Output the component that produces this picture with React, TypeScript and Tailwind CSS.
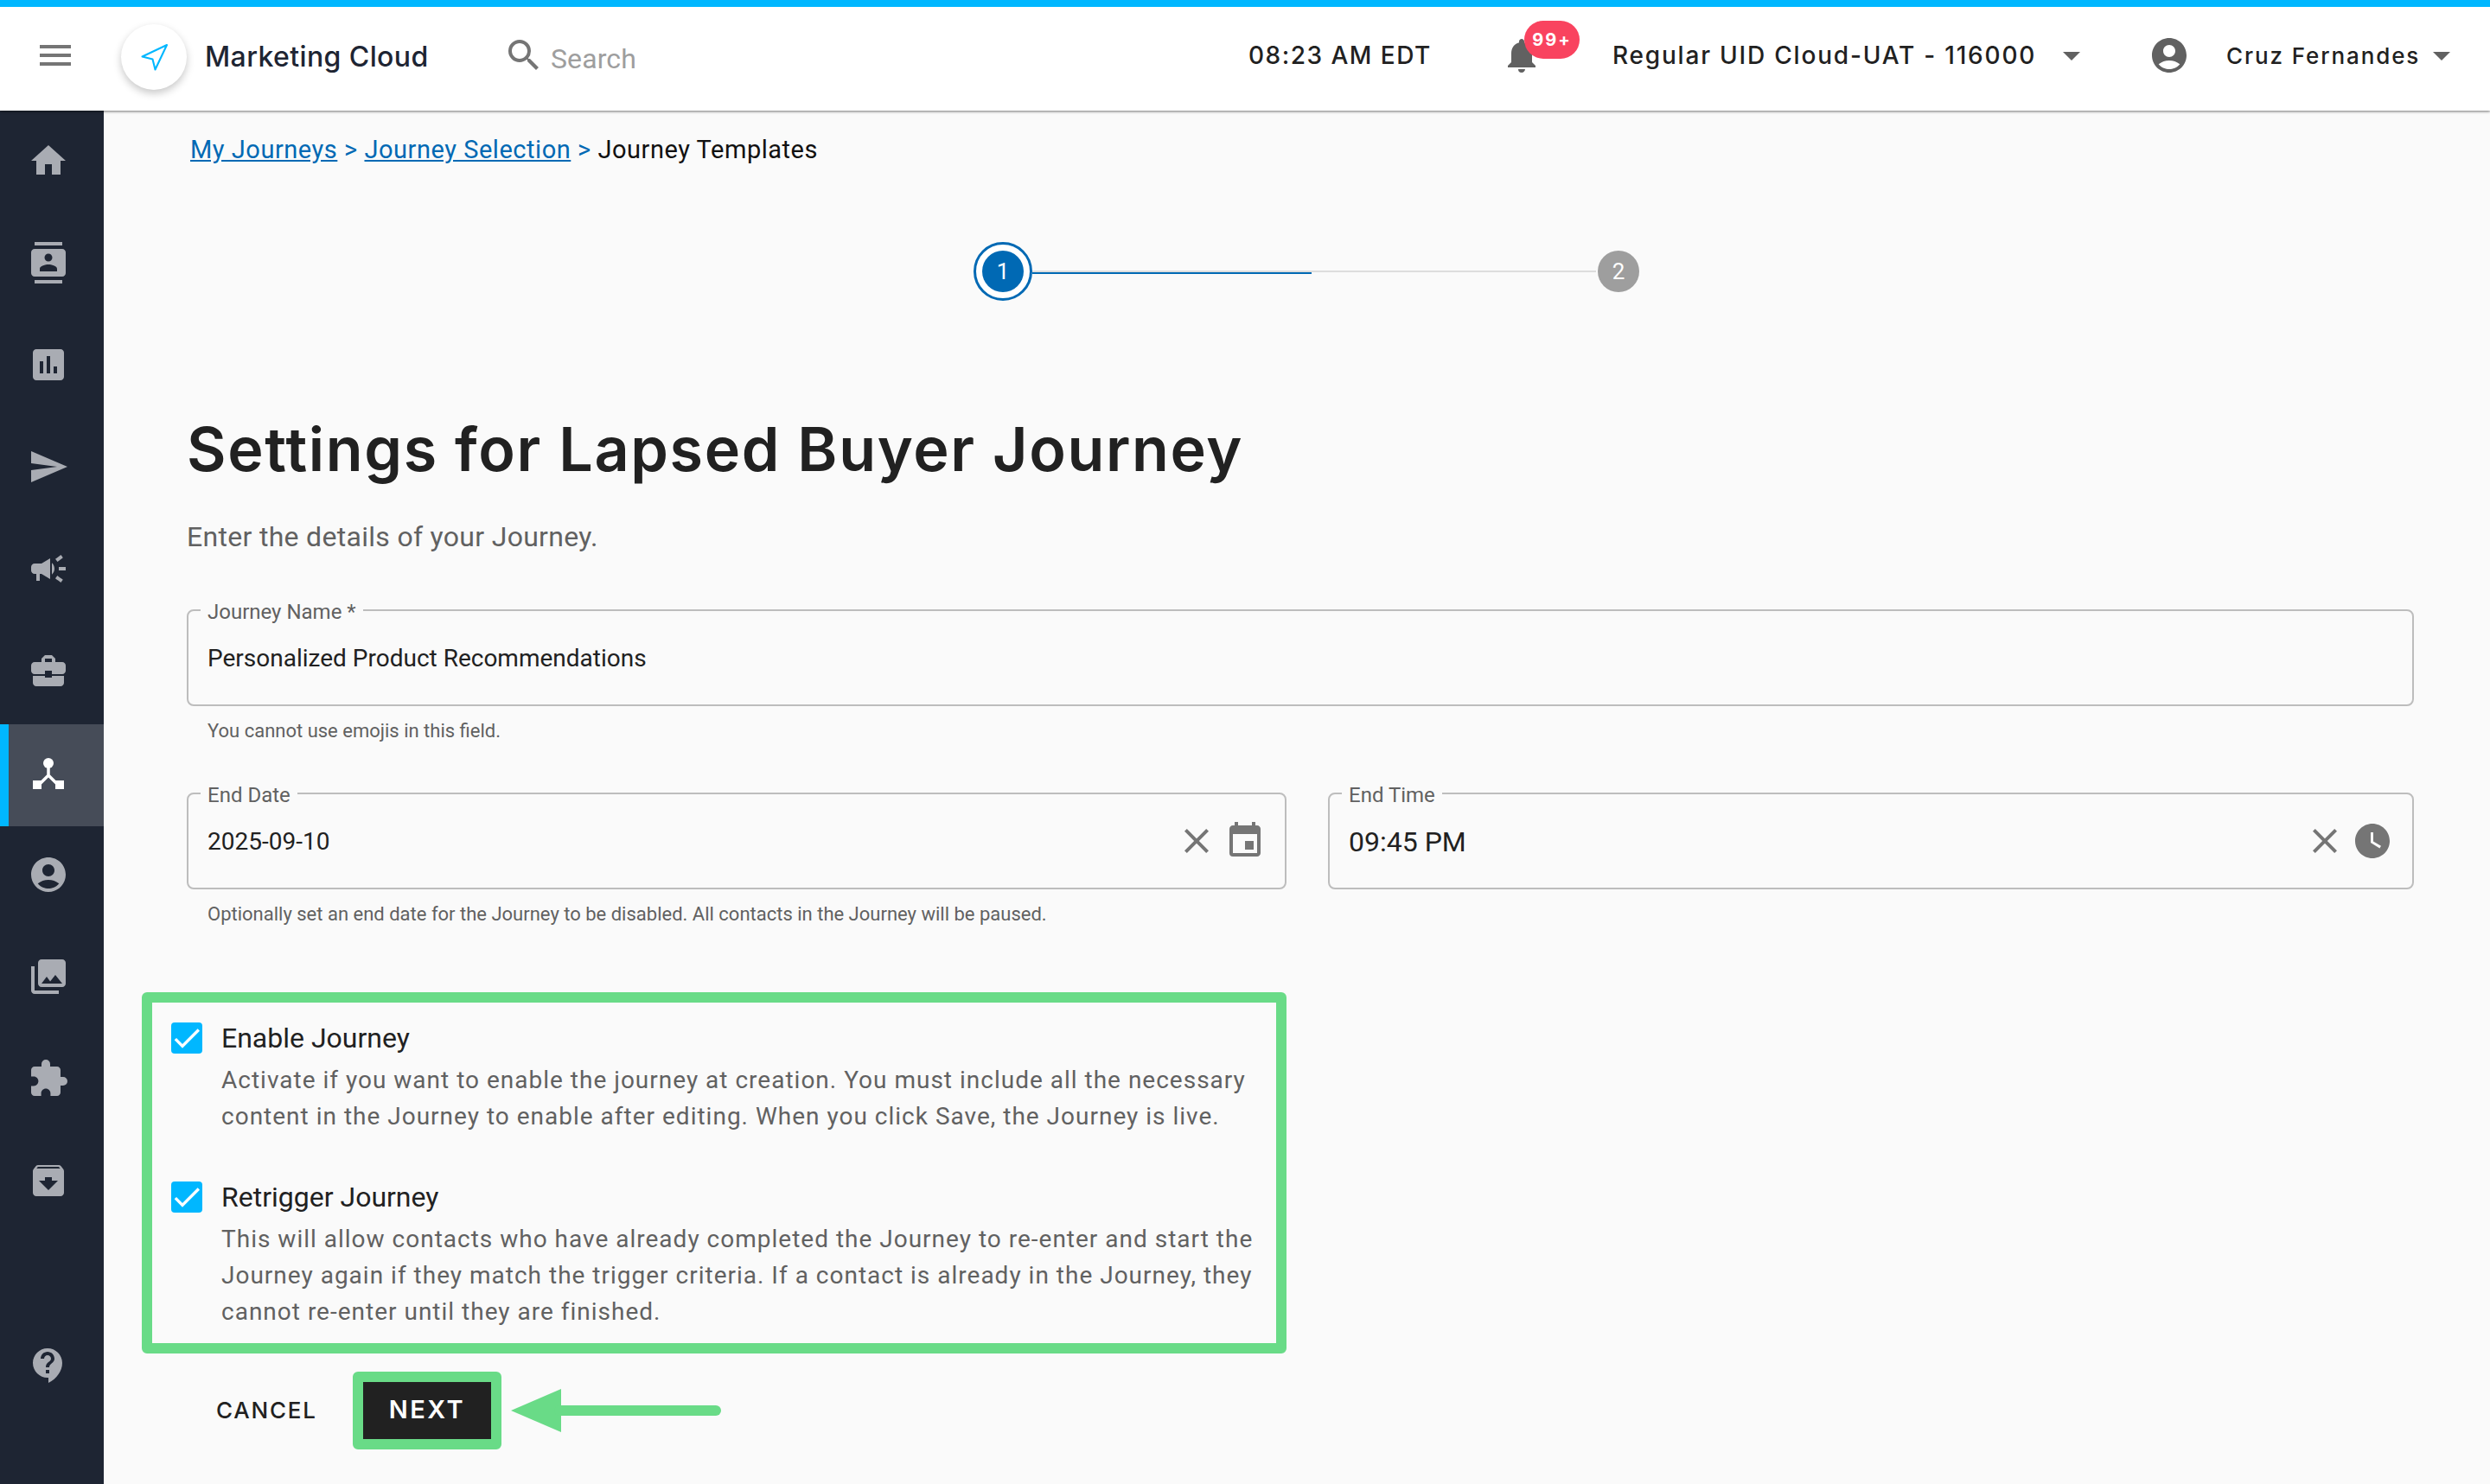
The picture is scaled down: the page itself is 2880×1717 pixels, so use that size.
import React from 'react';
import {
    MdAccountCircle,
    MdArchive,
    MdArrowDropDown,
    MdAssessment,
    MdBusinessCenter,
    MdCampaign,
    MdCheck,
    MdClose,
    MdContacts,
    MdContactSupport,
    MdEvent,
    MdExtension,
    MdHome,
    MdMenu,
    MdNotifications,
    MdPhotoLibrary,
    MdSearch,
    MdSend,
    MdWatchLater,
} from 'react-icons/md';
import { Navigation } from 'lucide-react';

const roboto = "font-['Roboto',sans-serif]";
const heading = "font-['Inter',sans-serif]";

const JourneyIcon = () => (
    <svg viewBox="0 0 36 36" className="h-9 w-9 text-white" fill="currentColor">
        <circle cx="18" cy="6" r="6" />
        <rect x="0" y="26" width="10" height="10" />
        <rect x="26" y="26" width="10" height="10" />
        <path d="M18 10V20L8 30M18 20L28 30" fill="none" stroke="currentColor" strokeWidth="3.5" />
    </svg>
);

const navTop = [MdHome, MdContacts, MdAssessment, MdSend, MdCampaign, MdBusinessCenter];
const navBottom = [MdAccountCircle, MdPhotoLibrary, MdExtension, MdArchive];

const NavItem = ({ Icon }: { Icon: React.ComponentType<{ className?: string }> }) => (
    <div className="flex h-[118px] shrink-0 pl-[32px] pt-[32px]">
        <Icon className="h-12 w-12 text-[#a9acb3]" />
    </div>
);

const Header = () => (
    <header className="relative z-10 flex h-[128px] shrink-0 border-t-[8px] border-[#00b7ff] bg-white pb-[8px] shadow-[0_1px_3px_rgba(0,0,0,0.55)]">
        <div className="flex items-center pl-[40px]">
            <MdMenu className="h-12 w-12 text-[#757575]" />
            <div className="ml-[52px] mt-[3px] flex h-[76px] w-[76px] items-center justify-center rounded-full bg-white shadow-[0_4px_10px_rgba(0,0,0,0.22)]">
                <Navigation className="mt-[2px] h-[36px] w-[36px] text-[#00b7ff]" strokeWidth={1.4} />
            </div>
            <div className={`ml-[21px] mt-[4px] w-[345px] text-[32px] font-medium tracking-[0.4px] text-[#1e2533] ${heading}`}>Marketing Cloud</div>
            <MdSearch className="h-12 w-12 text-[#757575]" />
            <div className={`ml-[7px] mt-[7px] text-[32px] tracking-[0.1px] text-[#9e9e9e] ${roboto}`}>Search</div>
        </div>
        <div className={`ml-auto flex items-center pr-[32px] text-[#212121] ${heading}`}>
            <div className="w-[292px] text-[28px] font-medium tracking-[1.5px]">08:23 AM EDT</div>
            <div className="relative h-12 w-12">
                <MdNotifications className="h-12 w-12 text-[#616161]" />
                <div className="absolute left-[27px] top-[-16px] flex h-[44px] w-[64px] items-center justify-center rounded-full bg-[#f9435f] text-[20px] font-bold tracking-[2px] text-white">99+</div>
            </div>
            <div className="ml-[81px] w-[507px] text-[28px] font-medium tracking-[1.8px]">Regular UID Cloud-UAT - 116000</div>
            <MdArrowDropDown className="h-12 w-12 text-[#616161]" />
            <MdAccountCircle className="ml-[65px] h-12 w-12 text-[#616161]" />
            <div className="ml-[42px] w-[225px] text-[26px] font-medium tracking-[1.9px]">Cruz Fernandes</div>
            <MdArrowDropDown className="h-12 w-12 text-[#616161]" />
        </div>
    </header>
);

const Sidebar = () => (
    <aside className="flex w-[120px] shrink-0 flex-col bg-[#1e2533] pt-[2px]">
        {navTop.map((Icon, i) => <NavItem key={i} Icon={Icon} />)}
        <div className="flex h-[118px] shrink-0 items-center border-l-[10px] border-[#00b7ff] bg-[#464c58] pb-[5px] pl-[28px]">
            <JourneyIcon />
        </div>
        {navBottom.map((Icon, i) => <NavItem key={i} Icon={Icon} />)}
        <div className="mt-auto pb-[113px] pl-[32px]">
            <MdContactSupport className="h-12 w-12 text-[#a9acb3]" />
        </div>
    </aside>
);

const Stepper = () => (
    <div className="ml-[1006px] mt-[89px] flex h-[68px] w-[770px] items-center">
        <div className="flex h-[68px] w-[68px] shrink-0 items-center justify-center rounded-full border-[3px] border-[#0069b4] bg-white">
            <div className={`flex h-[48px] w-[48px] items-center justify-center rounded-full bg-[#0069b4] text-[26px] text-white ${roboto}`}>1</div>
        </div>
        <div className="flex-1">
            <div className="ml-0 mt-[1px] h-[2px] w-full bg-[#dddddd]" />
            <div className="h-[2px] w-[323px] bg-[#0069b4]" />
        </div>
        <div className={`ml-[2px] flex h-[48px] w-[48px] shrink-0 items-center justify-center rounded-full bg-[#9e9e9e] text-[26px] text-white ${roboto}`}>2</div>
    </div>
);

const Field = ({ label, value, valueClass, children }: { label: string; value: string; valueClass: string; children?: React.ReactNode }) => (
    <div className="relative flex h-[112px] items-center rounded-[8px] border-2 border-[#bdbdbd] pl-[22px] pr-[22px]">
        <div className={`absolute left-[14px] top-[-12px] bg-[#fafafa] px-[8px] text-[24px] leading-[26px] text-[#616161] ${roboto}`}>{label}</div>
        <div className={`flex-1 pt-[1px] text-[#212121] ${roboto} ${valueClass}`}>{value}</div>
        {children}
    </div>
);

const Help = ({ text }: { text: string }) => (
    <div className={`mt-[14px] h-[30px] pl-[24px] text-[22px] leading-[30px] text-[#616161] ${roboto}`}>{text}</div>
);

const Checked = ({ title, lines }: { title: string; lines: string[] }) => (
    <div className="flex">
        <div className="flex h-[36px] w-[36px] shrink-0 items-center justify-center rounded-[4px] bg-[#00b7ff]">
            <MdCheck className="h-10 w-10 shrink-0 text-white" />
        </div>
        <div className={`ml-[22px] ${roboto}`}>
            <div className="h-[36px] text-[32px] leading-[36px] text-[#212121]">{title}</div>
            <div className="mt-[10px] text-[28px] leading-[42.3px] tracking-[1px] whitespace-nowrap text-[#616161]">
                {lines.map(l => <div key={l}>{l}</div>)}
            </div>
        </div>
    </div>
);

const GreenArrow = () => (
    <svg viewBox="0 0 243 50" className="ml-[11px] h-[50px] w-[243px] text-[#69db87]" fill="currentColor">
        <polygon points="0,25 58,0 58,50" />
        <rect x="50" y="19" width="193" height="12" rx="6" />
    </svg>
);

export default function App() {
    return (
        <div className="flex h-[1717px] w-[2880px] flex-col overflow-hidden bg-[#fafafa]">
            <Header />
            <div className="flex min-h-0 flex-1">
                <Sidebar />
                <main className="flex-1">
                    <div className={`ml-[100px] mt-[27px] h-[36px] text-[29px] leading-[36px] tracking-[0.53px] text-[#0069b4] ${roboto}`}>
                        <a href="#" className="underline">My Journeys</a>
                        <span> &gt; </span>
                        <a href="#" className="underline">Journey Selection</a>
                        <span> &gt; </span>
                        <span className="text-[#111111]">Journey Templates</span>
                    </div>
                    <Stepper />
                    <div className="ml-[96px] mr-[88px]">
                        <h1 className={`mt-[132px] h-[80px] text-[70px] font-semibold leading-[80px] tracking-[1.65px] text-[#212121] ${heading}`}>Settings for Lapsed Buyer Journey</h1>
                        <p className={`mt-[41px] h-[40px] text-[32px] leading-[40px] tracking-[0.3px] text-[#616161] ${roboto}`}>Enter the details of your Journey.</p>
                        <div className="mt-[64px]">
                            <Field label="Journey Name *" value="Personalized Product Recommendations" valueClass="text-[28px]" />
                            <Help text="You cannot use emojis in this field." />
                        </div>
                        <div className="mt-[56px] flex gap-[48px]">
                            <div className="w-[1272px]">
                                <Field label="End Date" value="2025-09-10" valueClass="text-[28px]">
                                    <MdClose className="h-12 w-12 text-[#757575]" />
                                    <MdEvent className="ml-[8px] h-12 w-12 text-[#757575]" />
                                </Field>
                                <Help text="Optionally set an end date for the Journey to be disabled. All contacts in the Journey will be paused." />
                            </div>
                            <div className="flex-1">
                                <Field label="End Time" value="09:45 PM" valueClass="text-[32px]">
                                    <MdClose className="h-12 w-12 text-[#757575]" />
                                    <MdWatchLater className="ml-[7px] h-12 w-12 text-[#757575]" />
                                </Field>
                            </div>
                        </div>
                        <div className="ml-[-52px] mt-[75px] flex h-[418px] w-[1324px] flex-col gap-[53px] rounded-[6px] border-[12px] border-[#69db87] pl-[22px] pt-[23px]">
                            <Checked
                                title="Enable Journey"
                                lines={[
                                    'Activate if you want to enable the journey at creation. You must include all the necessary',
                                    'content in the Journey to enable after editing. When you click Save, the Journey is live.',
                                ]}
                            />
                            <Checked
                                title="Retrigger Journey"
                                lines={[
                                    'This will allow contacts who have already completed the Journey to re-enter and start the',
                                    'Journey again if they match the trigger criteria. If a contact is already in the Journey, they',
                                    'cannot re-enter until they are finished.',
                                ]}
                            />
                        </div>
                        <div className="ml-[-8px] mt-[21px] flex items-center">
                            <div className={`ml-[42px] w-[158px] pb-[2px] text-[26px] font-medium tracking-[1.8px] text-[#212121] ${heading}`}>CANCEL</div>
                            <div className="rounded-[6px] border-[12px] border-[#69db87]">
                                <div className={`flex h-[66px] w-[148px] items-center justify-center bg-[#212121] pb-[2px] text-[29px] font-semibold tracking-[2.5px] text-white ${heading}`}>NEXT</div>
                            </div>
                            <GreenArrow />
                        </div>
                    </div>
                </main>
            </div>
        </div>
    );
}
